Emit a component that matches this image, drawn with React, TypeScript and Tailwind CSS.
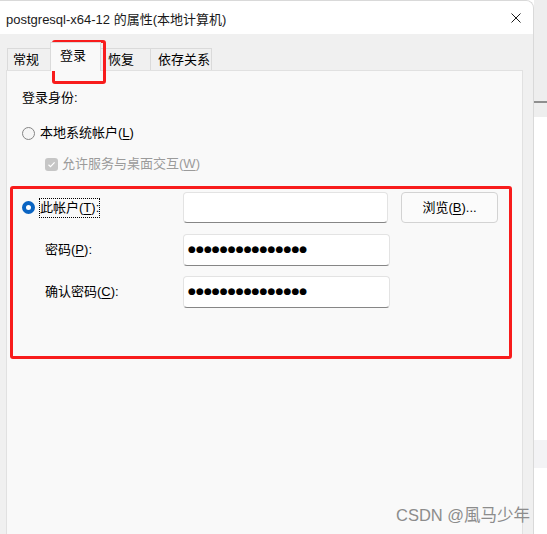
import React from "react";

function AccessKey({ text, k, tail = "" }: { text: string; k: string; tail?: string }) {
  return (
    <>
      {text}(<span className="underline underline-offset-[2px]">{k}</span>){tail}
    </>
  );
}

function Field({ width, height, dots = false }: { width: string; height: string; dots?: boolean }) {
  return (
    <div
      className={`${width} ${height} flex items-center rounded-[4px] border border-[#e3e3e3] border-b-[#868686] bg-white pb-[3px] pl-[4px]`}
    >
      {dots && (
        <span className="font-['DejaVu_Sans',sans-serif] text-[9px] leading-[12px] tracking-[0.1px] text-black">
          ●●●●●●●●●●●●●●●
        </span>
      )}
    </div>
  );
}

export default function App() {
  return (
    <div className="relative flex h-[534px] w-[547px] overflow-hidden bg-white font-['Liberation_Sans','Noto_Sans_CJK_SC',sans-serif] text-[13px] leading-[18px] text-black">
      {/* dialog window */}
      <div className="flex w-[534px] flex-col overflow-hidden rounded-tr-[8px] border-r border-t border-[#d9d9d9] bg-[#f0f0f0]">
        <div className="flex h-[33px] shrink-0 items-center justify-between bg-white pl-[6px] pr-[12px]">
          <span className="mt-[5px] text-[#1a1a1a]">postgresql-x64-12 的属性(本地计算机)</span>
          <svg width="10" height="10" viewBox="0 0 10 10">
            <path d="M0.5 0.5L9.5 9.5M9.5 0.5L0.5 9.5" stroke="#1b1b1b" strokeWidth="1" />
          </svg>
        </div>

        <div className="flex flex-1 flex-col pl-[6px] pr-[10px] pt-[8px]">
          {/* tabs */}
          <div className="flex h-[28px] shrink-0 items-end pl-[1px]">
            <div className="flex h-[22px] w-[43px] items-center border-l border-t border-[#dadada] pl-[5px]">常规</div>
            <div className="relative z-10 -mb-px flex h-[29px] w-[51px] items-start border-x border-t border-[#dadada] bg-[#f9f9f9] pl-[9px] pt-[4px]">
              登录
            </div>
            <div className="flex h-[22px] w-[49px] items-center border-t border-[#dadada] pl-[7px]">恢复</div>
            <div className="flex h-[22px] w-[62px] items-center border-x border-t border-[#dadada] pl-[7px]">依存关系</div>
          </div>

          {/* tab page */}
          <div className="flex flex-1 flex-col border-x border-t border-[#e1e1e1] bg-[#f9f9f9]">
            <div className="ml-[15px] mt-[18px]">登录身份:</div>

            <div className="ml-[15px] mt-[17px] flex items-center gap-[5px]">
              <span className="h-[13px] w-[13px] rounded-full border border-[#858585] bg-[#f6f6f6]" />
              <span>
                <AccessKey text="本地系统帐户" k="L" />
              </span>
            </div>

            <div className="ml-[38px] mt-[13px] flex items-center gap-[4px] text-[#9b9b9b]">
              <span className="flex h-[13px] w-[13px] items-center justify-center rounded-[3px] bg-[#c6c6c6]">
                <svg width="9" height="9" viewBox="0 0 9 9">
                  <path d="M1.5 4.8L3.5 6.7L7.6 2.3" fill="none" stroke="white" strokeWidth="1.2" />
                </svg>
              </span>
              <span>
                <AccessKey text="允许服务与桌面交互" k="W" />
              </span>
            </div>

            {/* annotated account group */}
            <div className="ml-[3px] mt-[13px] flex h-[173px] w-[502px] flex-col rounded-[3px] border-[3px] border-[#f81c1c]">
              <div className="mt-[3px] flex h-[31px] items-center">
                <div className="flex w-[170px] items-center gap-[4px] pl-[9px]">
                  <span className="h-[13px] w-[13px] rounded-full border-[4px] border-[#0a64c2] bg-white" />
                  <span className="border border-dotted border-black">
                    <AccessKey text="此帐户" k="T" tail=":" />
                  </span>
                </div>
                <Field width="w-[205px]" height="h-[31px]" />
                <button className="ml-[13px] h-[31px] w-[97px] rounded-[4px] border border-[#d3d3d3] bg-[#fbfbfb] text-center">
                  <AccessKey text="浏览" k="B" tail="..." />
                </button>
              </div>

              <div className="mt-[11px] flex h-[32px] items-center">
                <div className="w-[170px] pl-[32px]">
                  <AccessKey text="密码" k="P" tail=":" />
                </div>
                <Field width="w-[207px]" height="h-[32px]" dots />
              </div>

              <div className="mt-[10px] flex h-[32px] items-center">
                <div className="w-[170px] pl-[32px]">
                  <AccessKey text="确认密码" k="C" tail=":" />
                </div>
                <Field width="w-[207px]" height="h-[32px]" dots />
              </div>
            </div>
          </div>
        </div>
      </div>

      {/* desktop strip behind the window */}
      <div className="flex flex-1 flex-col">
        <div className="h-[101px] bg-[#eeeeee]" />
        <div className="h-[2px] bg-[#8f8f8f]" />
        <div className="h-[14px] bg-[#eeeeee]" />
        <div className="h-[323px]" />
        <div className="h-[28px] bg-[#f3f3f5]" />
      </div>

      {/* annotation around the selected tab */}
      <div className="absolute left-[52px] top-[40px] h-[44px] w-[54px] rounded-[3px] border-[3px] border-[#f81c1c]" />

      {/* watermark */}
      <span className="absolute left-[396px] top-[505px] text-[16.5px] leading-[20px] text-[#8c8c8c]">CSDN @風马少年</span>
    </div>
  );
}
